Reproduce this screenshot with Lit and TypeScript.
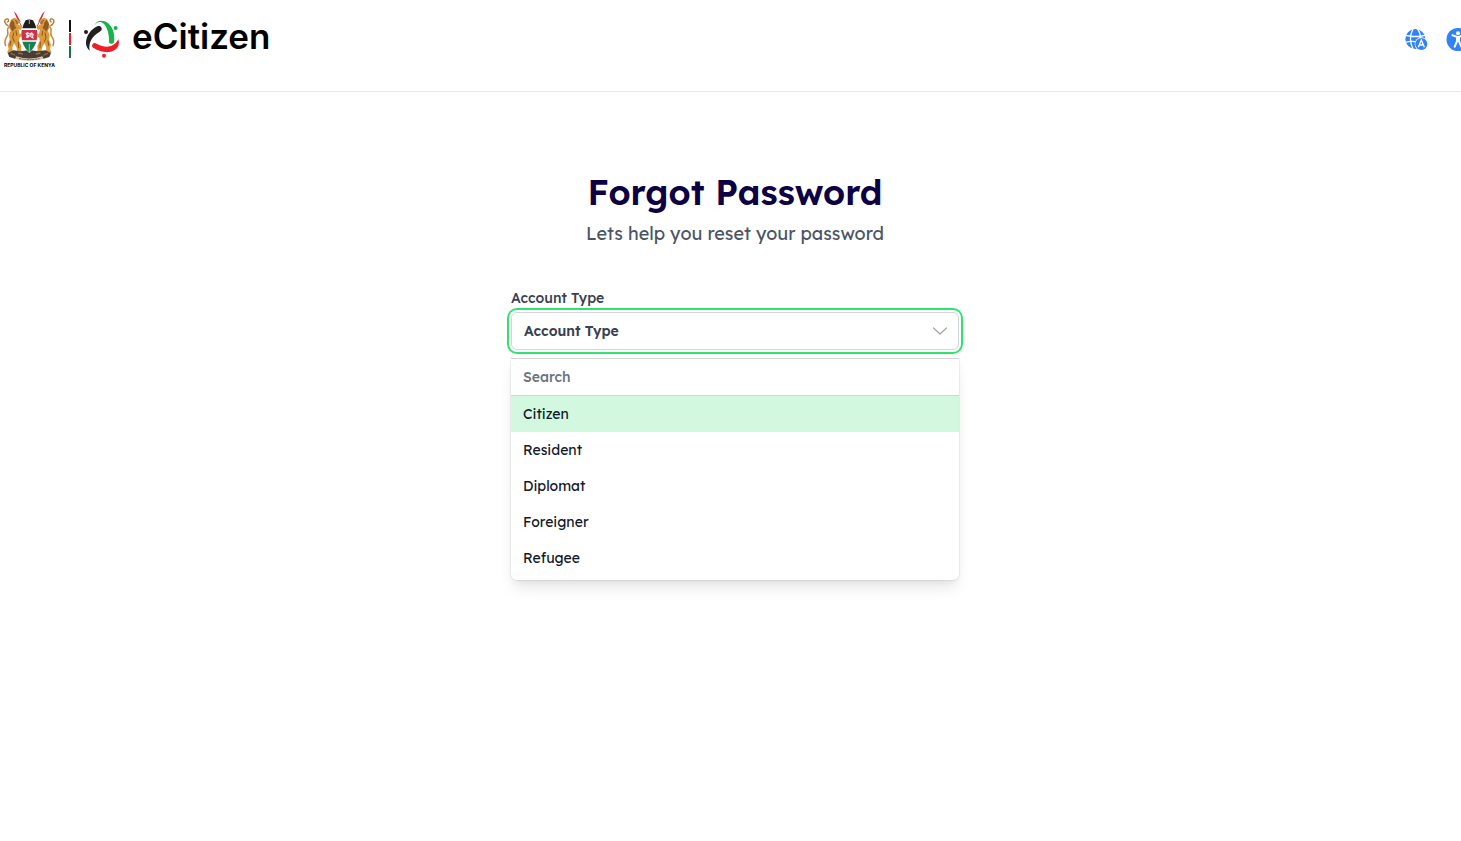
import { LitElement, html, css, svg } from "lit";
import { customElement, state } from "lit/decorators.js";
import { classMap } from "lit/directives/class-map.js";

const lion = () => svg`
  <path d="M23 62C14 57 9 46 18 42C25 40 28 48 21 51" stroke="#b4772c" stroke-width="4" fill="none"/>
  <path d="M25 66C16 76 28 84 20 94C14 102 12 112 16 122" stroke="#c8862f" stroke-width="4.5" fill="none"/>
  <path d="M33 43L42 38L52 42L57 51L53 58L61 64L67 61L69 69L59 75L55 72L58 87L68 83L70 91L57 98L56 108L63 123L62 135L67 141L52 142L48 126L41 115L36 128L38 143L20 143L25 132L22 119L28 105L26 91L31 77L25 65L29 52Z" fill="#dd9a3b"/>
  <path d="M35 44L28 58L30 69L37 80L42 73L48 69L43 60L42 52Z" fill="#935b20"/>
  <path d="M40 84L37 98L42 110M47 78L49 91M31 108L29 121M54 111L55 128" stroke="#784717" stroke-width="2.5" fill="none"/>
  <path d="M45 47L50 49M48 54L53 54" stroke="#3e291b" stroke-width="2"/>`;

const emblem = svg`
  <g stroke-linecap="round" stroke-linejoin="round">
    <path d="M47 30L73 84M127 30L101 84" stroke="#9b5a50" stroke-width="3" fill="none"/>
    <path d="M40 18L48 26L61 51L52 44ZM134 18L126 26L113 51L122 44Z" fill="#d62c3f"/>
    <g>${lion()}</g>
    <g transform="translate(174 0) scale(-1 1)">${lion()}</g>
    <path d="M22 144L39 136L62 139L87 135L112 139L135 136L152 144L147 156L130 161L44 161L27 156Z" fill="#4b3d36"/>
    <path d="M32 145L43 150M55 144L66 147M108 147L119 144M131 150L142 145" stroke="#8d7150" stroke-width="4"/>
    <path d="M42 151L48 156M126 156L132 151" stroke="#426344" stroke-width="3"/>
    <path d="M48 154Q87 168 126 154L130 162Q87 173 44 162Z" fill="#d9c8ac"/>
    <path d="M57 161Q87 167 117 161" stroke="#705b48" stroke-width="3" stroke-dasharray="4 4" fill="none"/>
    <path d="M72 46Q87 38 102 46C109 60 112 74 112 91C112 113 103 130 87 144C71 130 62 113 62 91C62 74 65 60 72 46Z" fill="#fff"/>
    <path d="M76 46Q87 41 98 46Q105 57 108 70H66Q69 57 76 46Z" fill="#201d1f"/>
    <path d="M64 75H110Q113 91 109 106H65Q61 91 64 75Z" fill="#c8344b"/>
    <path d="M66 110H108Q102 129 87 143Q72 129 66 110Z" fill="#168253"/>
    <path d="M87 46V56M87 118V140" stroke="#e9eee9" stroke-width="2"/>
    <path d="M75 85L82 81L87 85L95 82L101 89L98 94L101 101L94 99L89 94L83 99L76 98L79 92Z" fill="#f7e5e5"/>
    <path d="M83 88L89 90M95 90L94 94" stroke="#c8344b" stroke-width="2"/>
  </g>`;

const swirl = svg`
  <path d="M101 64C108 48 122 44 134 49C155 56 166 83 162 110C161 119 147 118 147 110C148 84 139 57 124 52C115 49 107 55 101 64Z" fill="#19b24b"/>
  <path d="M123 66C128 72 124 78 118 81C99 92 84 112 89 137C74 125 75 102 88 84C95 74 105 67 112 64C117 62 121 62 123 66Z" fill="#231f20"/>
  <path d="M97 119C101 111 106 114 113 118C135 130 163 128 175 103C182 121 169 138 149 141C132 143 114 138 102 130C97 127 95 123 97 119Z" fill="#ed2029"/>
  <circle cx="78" cy="81" r="6" fill="#231f20"/>
  <circle cx="167" cy="69" r="6" fill="#19b24b"/>
  <circle cx="132" cy="152" r="6" fill="#ed2029"/>`;

@customElement("app-root")
export class AppRoot extends LitElement {
  static styles = css`
    :host {
      display: block;
      min-height: 100vh;
      overflow: hidden;
      background: #fff;
      color: #111827;
      font-family: Lexend, Inter, "Open Sans", sans-serif;
      font-size: 14px;
      line-height: 20px;
    }
    * { box-sizing: border-box; }
    svg { display: block; }
    button, input { font: inherit; color: inherit; }
    .page { margin-right: -9px; }
    .header {
      display: flex;
      justify-content: space-between;
      align-items: flex-start;
      height: 92px;
      border-bottom: 1px solid #e5e7eb;
    }
    .brand {
      display: flex;
      align-items: flex-start;
      padding: 11px 0 0 3px;
      color: #000;
      text-decoration: none;
    }
    .crest { width: 53px; }
    .motto {
      display: block;
      font-size: 5px;
      line-height: 6px;
      font-family: Inter, sans-serif;
      font-weight: 700;
      text-align: center;
      white-space: nowrap;
    }
    .flag {
      display: grid;
      gap: 1px;
      width: 2px;
      height: 38px;
      margin: 9px 12px 0 13px;
    }
    .black { background: #111; }
    .red { background: #e5202b; }
    .green { background: #14733f; }
    .swirl { margin-top: 9px; }
    .name {
      margin: 5px 0 0 12px;
      font-family: Inter, sans-serif;
      font-size: 35px;
      line-height: 40px;
      font-weight: 600;
    }
    .tools { display: flex; gap: 18px; padding-top: 28px; }
    .tool {
      padding: 0;
      border: 0;
      background: none;
      cursor: pointer;
    }
    .main {
      width: 100%;
      max-width: 448px;
      margin: 0 auto;
      padding-top: 80px;
    }
    .title {
      margin: 0;
      color: #0d0044;
      font-size: 35px;
      line-height: 40px;
      font-weight: 600;
      text-align: center;
      white-space: nowrap;
    }
    .lead {
      margin: 8px 0 0;
      color: #4b5563;
      font-size: 18px;
      line-height: 28px;
      text-align: center;
    }
    .form { margin-top: 40px; }
    .label {
      display: block;
      color: #374151;
      font-weight: 500;
    }
    .picker { position: relative; margin-top: 4px; }
    .trigger {
      display: flex;
      align-items: center;
      justify-content: space-between;
      width: 100%;
      height: 38px;
      padding: 0 10px 0 12px;
      border: 1px solid #d1d5db;
      border-radius: 6px;
      background: #fff;
      color: #374151;
      font-weight: 600;
      cursor: pointer;
    }
    .trigger.open, .trigger:focus-visible {
      outline: 0;
      box-shadow: 0 0 0 2px #fff, 0 0 0 4px #2ee46f;
    }
    .panel {
      position: absolute;
      top: 100%;
      left: 0;
      right: 0;
      margin-top: 4px;
      padding: 4px 0;
      border-radius: 6px;
      background: #fff;
      box-shadow: 0 0 0 1px rgba(0, 0, 0, 0.05), 0 10px 15px -3px rgba(0, 0, 0, 0.1), 0 4px 6px -2px rgba(0, 0, 0, 0.05);
    }
    .trigger.open { position: relative; z-index: 1; }
    .search {
      display: block;
      width: 100%;
      height: 38px;
      padding: 0 12px;
      border: solid #d1d5db;
      border-width: 1px 0;
      border-radius: 0;
      outline: 0;
      background: #fff;
      font-weight: 500;
    }
    .search::placeholder { color: #6b7280; opacity: 1; }
    .options { margin: 0; padding: 0; list-style: none; }
    .option { padding: 8px 12px; cursor: pointer; }
    .option.active { background: #d2f8e0; }
  `;

  @state() private open = true;
  @state() private query = "";
  @state() private active = "Citizen";
  @state() private chosen = "";

  private types = ["Citizen", "Resident", "Diplomat", "Foreigner", "Refugee"];

  private choose(type: string) {
    this.chosen = type;
    this.open = false;
  }

  private renderPanel() {
    const matches = this.types.filter((t) => t.toLowerCase().includes(this.query.toLowerCase()));
    return html`
      <div class="panel">
        <input class="search" type="text" placeholder="Search" aria-label="Search" aria-controls="types"
          .value=${this.query}
          @input=${(e: Event) => (this.query = (e.target as HTMLInputElement).value)}>
        <ul class="options" id="types" role="listbox" aria-labelledby="type-label">
          ${matches.map((t) => html`
            <li class=${classMap({ option: true, active: t === this.active })} role="option"
              aria-selected=${t === this.chosen ? "true" : "false"}
              @mouseenter=${() => (this.active = t)}
              @click=${() => this.choose(t)}>${t}</li>`)}
        </ul>
      </div>`;
  }

  render() {
    return html`
      <div class="page">
        <header class="header">
          <a class="brand" href="#" aria-label="eCitizen">
            <span class="crest">
              <svg width="53" height="51" viewBox="8 18 159 153" aria-hidden="true">${emblem}</svg>
              <span class="motto">REPUBLIC OF KENYA</span>
            </span>
            <span class="flag"><i class="black"></i><i class="red"></i><i class="green"></i></span>
            <svg class="swirl" width="37" height="38" viewBox="69 45 111 114" aria-hidden="true">${swirl}</svg>
            <span class="name">eCitizen</span>
          </a>
          <div class="tools">
            <button class="tool" type="button" aria-label="Language">
              <svg width="23" height="23" viewBox="42 39 69 69">
                <circle cx="73" cy="72" r="30" fill="#3083fa"/>
                <g fill="none" stroke="#fff" stroke-width="4">
                  <path d="M44 61Q73 68 102 61M43 82Q60 77 80 81M66 42Q51 70 66 102M80 42Q89 55 88 72"/>
                </g>
                <circle cx="91" cy="87" r="20" fill="#fff"/>
                <circle cx="91" cy="87" r="18" fill="#3083fa"/>
                <path d="M82 97L91 75L100 97M86 90H96" fill="none" stroke="#fff" stroke-width="4"/>
              </svg>
            </button>
            <button class="tool" type="button" aria-label="Accessibility">
              <svg width="24" height="23" viewBox="164 38 72 70">
                <circle cx="200" cy="73" r="35" fill="#3083fa"/>
                <circle cx="200" cy="54" r="6" fill="#fff"/>
                <path d="M183 60L197 65H203L217 60M200 65V78M197 65V78L190 95M203 65V78L210 95" fill="none" stroke="#fff" stroke-width="6" stroke-linecap="round" stroke-linejoin="round"/>
              </svg>
            </button>
          </div>
        </header>
        <main class="main">
          <h1 class="title">Forgot Password</h1>
          <p class="lead">Lets help you reset your password</p>
          <form class="form" @submit=${(e: Event) => e.preventDefault()}>
            <label class="label" id="type-label" for="type">Account Type</label>
            <div class="picker">
              <button class=${classMap({ trigger: true, open: this.open })} id="type" type="button" role="combobox"
                aria-haspopup="listbox" aria-controls="types" aria-expanded=${this.open ? "true" : "false"}
                @click=${() => (this.open = !this.open)}>
                <span>${this.chosen || "Account Type"}</span>
                <svg width="16" height="16" viewBox="0 0 16 16" fill="none" stroke="#9ca3af" stroke-width="1.2" stroke-linecap="round" stroke-linejoin="round" aria-hidden="true">
                  <path d="M1.5 5L8 11L14.5 5"/>
                </svg>
              </button>
              ${this.open ? this.renderPanel() : null}
            </div>
          </form>
        </main>
      </div>`;
  }
}
